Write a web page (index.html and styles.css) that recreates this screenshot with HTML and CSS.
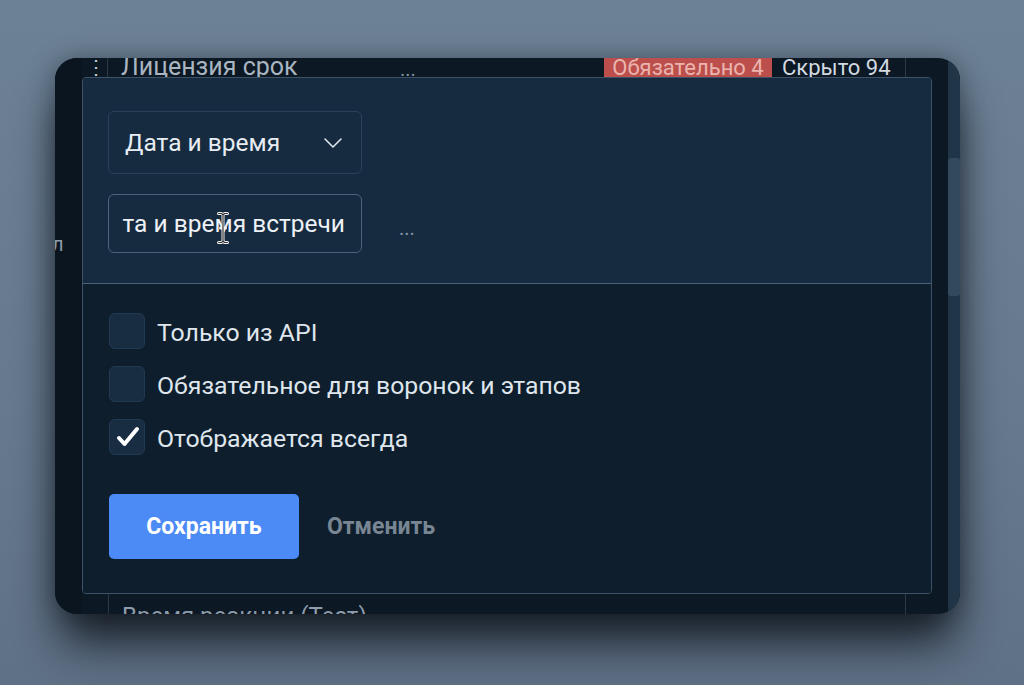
FILE: index.html
```html
<!DOCTYPE html>
<html lang="ru">
<head>
<meta charset="utf-8">
<title>Поле</title>
<link rel="stylesheet" href="styles.css">
</head>
<body>
<div class="card">
  <div class="side"><span class="side-text">ал</span></div>
  <div class="main">
    <div class="row row-top">
      <div class="handle">⋮</div>
      <div class="cell-title">Лицензия срок</div>
      <div class="cell-dots">...</div>
      <div class="spacer"></div>
      <div class="badge-req">Обязательно 4</div>
      <div class="badge-hidden">Скрыто 94</div>
    </div>
    <div class="popup">
      <div class="pop-top">
        <div class="select">
          <span>Дата и время</span>
          <svg class="chevron" width="20" height="12" viewBox="0 0 20 12"><path d="M2 2 L10 10 L18 2" fill="none" stroke="#dfe6ee" stroke-width="1.6" stroke-linecap="round" stroke-linejoin="round"/></svg>
        </div>
        <div class="field-row">
          <div class="field">
            <div class="clip"><span class="value">Дата и время встречи</span></div>
            <svg class="ibeam" width="12" height="32" viewBox="0 0 12 32"><path d="M1.5 1.5 H4.5 L6 3 L7.5 1.5 H10.5 M6 3 V29 M1.5 30.5 H4.5 L6 29 L7.5 30.5 H10.5 M3.5 16 H8.5" fill="none" stroke="#f2f2f2" stroke-width="3" stroke-linecap="round" stroke-linejoin="round"/><path d="M1.5 1.5 H4.5 L6 3 L7.5 1.5 H10.5 M6 3 V29 M1.5 30.5 H4.5 L6 29 L7.5 30.5 H10.5" fill="none" stroke="#3a3a3a" stroke-width="1.2" stroke-linecap="round" stroke-linejoin="round"/></svg>
          </div>
          <span class="more">...</span>
        </div>
      </div>
      <div class="pop-bottom">
        <div class="checks">
          <label class="check"><span class="box"></span><span class="check-text">Только из API</span></label>
          <label class="check"><span class="box"></span><span class="check-text">Обязательное для воронок и этапов</span></label>
          <label class="check"><span class="box box-on"><svg width="36" height="36" viewBox="0 0 36 36"><path d="M10 19 L15.5 25 L28 10" fill="none" stroke="#ffffff" stroke-width="4" stroke-linecap="round" stroke-linejoin="round"/></svg></span><span class="check-text">Отображается всегда</span></label>
        </div>
        <div class="actions">
          <button class="btn-save">Сохранить</button>
          <button class="btn-cancel">Отменить</button>
        </div>
      </div>
    </div>
    <div class="row row-bottom">
      <div class="cell-title muted">Время реакции (Тест)</div>
    </div>
  </div>
  <div class="scroll"><div class="thumb"></div></div>
</div>
</body>
</html>
```
FILE: styles.css
```css
* { box-sizing: border-box; }

html, body {
  margin: 0;
  height: 685px;
  overflow: hidden;
}

body {
  background: linear-gradient(180deg, #6d8196 0%, #66798e 60%, #5f7186 100%);
  font-family: Roboto, "Liberation Sans", sans-serif;
  padding-top: 58px;
  padding-left: 55px;
}

.card {
  width: 905px;
  height: 556px;
  border-radius: 22px;
  overflow: hidden;
  background: #0c1823;
  display: flex;
  box-shadow: 0 34px 46px -6px rgba(12, 16, 22, 0.85), 0 0 24px rgba(10, 16, 24, 0.35);
}

.side {
  width: 27px;
  flex: none;
  background: #0a151f;
  padding-top: 176px;
  overflow: hidden;
}

.side-text {
  display: block;
  margin-left: -14px;
  color: #8a9bac;
  font-size: 20px;
  line-height: 20px;
}

.main {
  width: 866px;
  flex: none;
  display: flex;
  flex-direction: column;
}

.scroll {
  width: 12px;
  flex: none;
  background: #213548;
  padding-top: 100px;
}

.thumb {
  height: 138px;
  background: #33495d;
  border-radius: 3px;
}

/* background list rows */
.row {
  display: flex;
  width: 824px;
  overflow: hidden;
  flex: none;
}

.row-top {
  height: 19px;
  font-size: 25px;
  line-height: 17px;
  color: #a9b5c1;
}

.handle {
  width: 26px;
  flex: none;
  text-align: center;
  color: #c6cdd4;
  font-size: 20px;
  line-height: 19px;
  padding-left: 3px;
  border-right: 1px solid #2a3a4a;
}

.cell-title {
  width: 292px;
  flex: none;
  padding-left: 13px;
  white-space: nowrap;
}

.cell-dots {
  color: #7f8f9f;
  font-size: 20px;
  line-height: 22px;
}

.spacer { flex: 1; }

.badge-req {
  flex: none;
  width: 168px;
  background: #bc4f4c;
  color: #eab4ae;
  font-size: 22px;
  line-height: 19px;
  text-align: center;
}

.badge-hidden {
  flex: none;
  width: 134px;
  padding-left: 10px;
  color: #d2d9e0;
  font-size: 22px;
  line-height: 19px;
  border-right: 1px solid #2a3a4a;
}

.row-bottom {
  height: 20px;
  padding-left: 26px;
}

.row-bottom .cell-title {
  flex: 1;
  border-left: 1px solid #2a3a4a;
  border-right: 1px solid #2a3a4a;
  font-size: 24px;
  line-height: 44px;
}

.muted { color: #8e9cab; }

/* popup */
.popup {
  width: 850px;
  height: 517px;
  flex: none;
  border: 1px solid #3b5269;
  border-radius: 4px;
  overflow: hidden;
  display: flex;
  flex-direction: column;
}

.pop-top {
  background: #162b3f;
  padding: 33px 25px 30px;
  border-bottom: 1px solid #48647e;
  display: flex;
  flex-direction: column;
  gap: 20px;
}

.select {
  width: 254px;
  height: 63px;
  border: 1px solid #2a4259;
  border-radius: 6px;
  display: flex;
  align-items: center;
  justify-content: space-between;
  padding: 0 18px 0 16px;
  color: #e7edf3;
  font-size: 24.5px;
}

.chevron { display: block; }

.field-row {
  display: flex;
  align-items: center;
  gap: 37px;
}

.field {
  position: relative;
  width: 254px;
  height: 59px;
  border: 1px solid #4d6379;
  border-radius: 6px;
  padding: 0 16px 0 13px;
  display: flex;
  align-items: center;
}

.clip {
  flex: 1;
  overflow: hidden;
  display: flex;
  justify-content: flex-end;
  white-space: nowrap;
}

.value {
  flex: none;
  color: #eef2f6;
  font-size: 24.5px;
}

.ibeam {
  position: absolute;
  left: 108px;
  top: 17px;
}

.more {
  color: #8395a6;
  font-size: 20px;
  padding-top: 8px;
}

.pop-bottom {
  flex: 1;
  background: #0f1e2c;
  padding: 29px 26px 33px;
  display: flex;
  flex-direction: column;
  gap: 39px;
}

.checks {
  display: flex;
  flex-direction: column;
  gap: 17px;
}

.check {
  display: flex;
  align-items: center;
  gap: 12px;
  height: 36px;
}

.box {
  width: 36px;
  height: 36px;
  flex: none;
  border-radius: 6px;
  background: #182d42;
  border: 1px solid #213a52;
  display: block;
}

.box svg { display: block; margin: -1px; }

.check-text {
  color: #dfe6ed;
  font-size: 24.8px;
  padding-top: 3px;
}

.actions {
  display: flex;
  align-items: center;
  gap: 28px;
}

button {
  font-family: Roboto, "Liberation Sans", sans-serif;
  border: 0;
  cursor: pointer;
}

.btn-save {
  width: 190px;
  height: 65px;
  border-radius: 5px;
  background: #4c8bf5;
  color: #ffffff;
  font-size: 23px;
  font-weight: 700;
}

.btn-cancel {
  background: transparent;
  color: #788694;
  font-size: 23px;
  font-weight: 700;
  padding: 0;
}
```
